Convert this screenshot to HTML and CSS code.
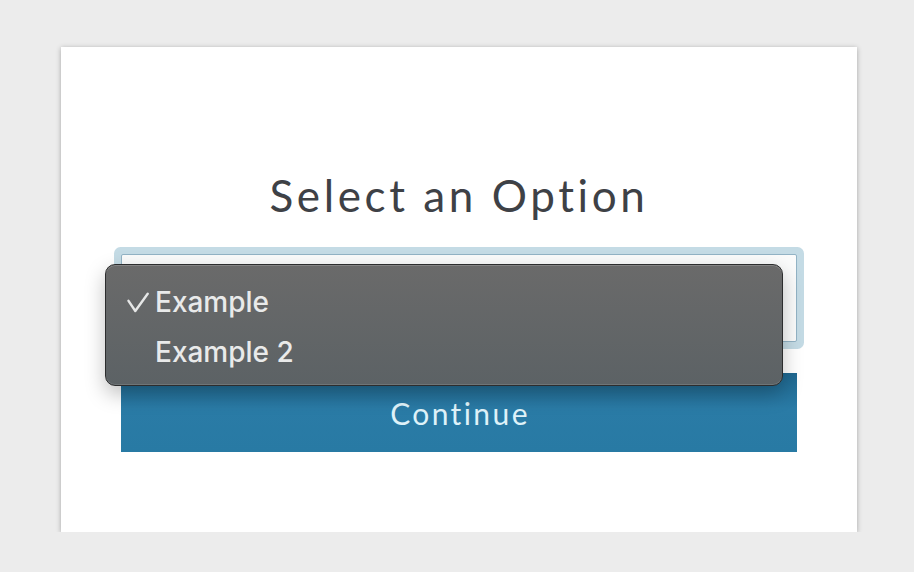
FILE: index.html
```html
<!DOCTYPE html>
<html lang="en">
<head>
<meta charset="utf-8">
<title>Select an Option</title>
<link rel="stylesheet" href="styles.css">
</head>
<body>
<div class="card">
  <h1 class="title">Select an Option</h1>
  <div class="select-wrap">
    <div class="select"></div>
    <div class="menu">
      <div class="menu-item">
        <svg class="check" width="22" height="22" viewBox="0 0 22 22"><path d="M1.5 8.8 L8.3 19 L20.7 1.8" fill="none" stroke="#e6e7e7" stroke-width="2.4" stroke-linecap="round" stroke-linejoin="round"/></svg>
        <span>Example</span>
      </div>
      <div class="menu-item"><span>Example 2</span></div>
    </div>
  </div>
  <button class="continue">Continue</button>
</div>
</body>
</html>
```

FILE: styles.css
```css
html, body {
  margin: 0;
  padding: 0;
}
body {
  background: #ececec;
  padding: 47px 0 0 61px;
  font-family: Lato, "Open Sans", sans-serif;
}
.card {
  width: 796px;
  height: 485px;
  box-sizing: border-box;
  background: #ffffff;
  box-shadow: 0 1px 5px rgba(0, 0, 0, 0.3);
  padding: 122px 60px 0 60px;
}
.title {
  margin: 0 0 33px 0;
  height: 52px;
  line-height: 52px;
  font-size: 44px;
  font-weight: 400;
  letter-spacing: 3.6px;
  color: #3e4146;
  text-align: center;
}
.select-wrap {
  position: relative;
}
.select {
  height: 88px;
  box-sizing: border-box;
  border: 1px solid #92b3c5;
  border-radius: 2px;
  background: #fafbfb;
  box-shadow: 0 0 0 7px #c4dbe5;
}
.menu {
  position: absolute;
  left: -16px;
  top: 10px;
  width: 678px;
  height: 122px;
  box-sizing: border-box;
  padding: 12px 0 10px 0;
  border: 1px solid #2c2d2e;
  border-radius: 10px;
  background: linear-gradient(#6a6a6a, #5c6265);
  box-shadow: inset 0 1px 0 rgba(255, 255, 255, 0.18), inset 0 -1px 0 rgba(255, 255, 255, 0.12), 0 8px 20px rgba(0, 0, 0, 0.25);
  font-family: Inter, "Noto Sans", sans-serif;
  color: #e9eaea;
  z-index: 2;
}
.menu-item {
  position: relative;
  height: 50px;
  line-height: 50px;
  font-size: 28px;
  font-weight: 500;
  padding-left: 49px;
}
.check {
  position: absolute;
  left: 21px;
  top: 15px;
}
.continue {
  display: flex;
  align-items: center;
  justify-content: center;
  width: 100%;
  height: 79px;
  margin-top: 31px;
  border: 0;
  padding: 0 0 0 2px;
  background: linear-gradient(#1f6890, #2a7ba6 45%, #287aa4);
  color: #dff2f9;
  font-family: Lato, "Open Sans", sans-serif;
  font-size: 30px;
  font-weight: 400;
  letter-spacing: 2.4px;
}
```
